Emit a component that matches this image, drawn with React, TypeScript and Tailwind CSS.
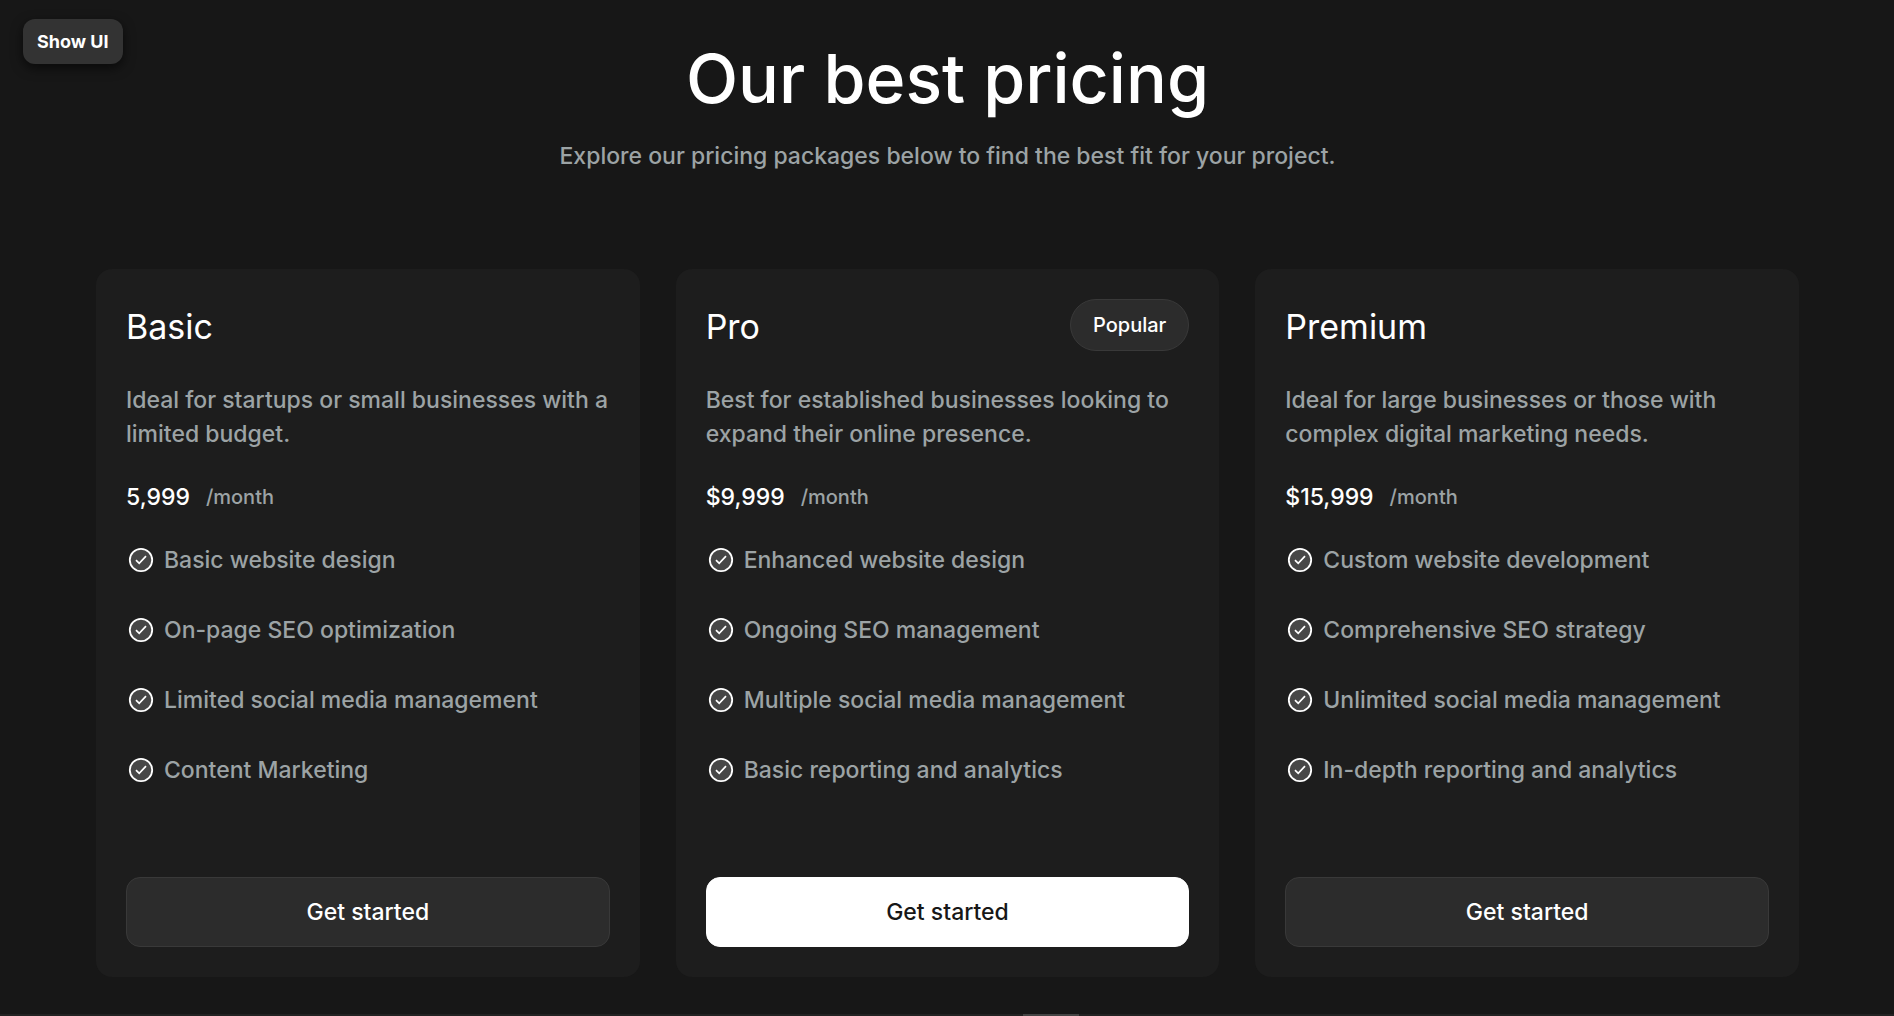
interface Plan {
  name: string;
  description: string;
  price: string;
  features: string[];
  popular?: boolean;
}

const plans: Plan[] = [
  {
    name: 'Basic',
    description: 'Ideal for startups or small businesses with a limited budget.',
    price: '5,999',
    features: [
      'Basic website design',
      'On-page SEO optimization',
      'Limited social media management',
      'Content Marketing',
    ],
  },
  {
    name: 'Pro',
    description: 'Best for established businesses looking to expand their online presence.',
    price: '$9,999',
    popular: true,
    features: [
      'Enhanced website design',
      'Ongoing SEO management',
      'Multiple social media management',
      'Basic reporting and analytics',
    ],
  },
  {
    name: 'Premium',
    description: 'Ideal for large businesses or those with complex digital marketing needs.',
    price: '$15,999',
    features: [
      'Custom website development',
      'Comprehensive SEO strategy',
      'Unlimited social media management',
      'In-depth reporting and analytics',
    ],
  },
];

function CheckIcon() {
  return (
    <svg width="30" height="30" viewBox="0 0 30 30" fill="none" className="shrink-0" aria-hidden="true">
      <circle cx="15" cy="15" r="11.2" fill="#474747" stroke="white" strokeWidth="1.8" />
      <path d="M10 15.2L13.2 18.4L20 11.2" stroke="white" strokeWidth="1.7" />
    </svg>
  );
}

function PlanCard({ name, description, price, features, popular }: Plan) {
  return (
    <article className="flex flex-col rounded-2xl bg-[#1d1d1d] p-[30px]">
      <div className="flex items-center justify-between">
        <h2 className="pt-1 text-[34px] leading-[48px] text-white">{name}</h2>
        {popular && (
          <span className="flex h-[52px] items-center rounded-full border border-[#393939] bg-[#2c2c2c] px-[22px] text-xl font-medium text-white">
            Popular
          </span>
        )}
      </div>
      <p className="mt-8 text-[23px] leading-[34px] font-[450]">{description}</p>
      <div className="mt-[29px] flex items-center gap-4">
        <span className="text-[23px] leading-[34px] font-medium text-white">{price}</span>
        <span className="text-[20px] leading-[34px] font-[450]">/month</span>
      </div>
      <ul className="mt-[29px] mb-[90px] flex flex-col gap-9">
        {features.map((feature) => (
          <li key={feature} className="flex items-center gap-2 text-[23px] leading-[34px] font-[450]">
            <CheckIcon />
            {feature}
          </li>
        ))}
      </ul>
      <button
        type="button"
        className={`mt-auto h-[70px] w-full cursor-pointer rounded-[14px] border text-[23px] ${
          popular
            ? 'border-white bg-white font-[450] text-[#171717]'
            : 'border-[#393939] bg-[#2c2c2c] font-medium text-white'
        }`}
      >
        Get started
      </button>
    </article>
  );
}

export default function App() {
  return (
    <div className="flex min-h-screen flex-col bg-[#171717] font-['Inter',sans-serif] text-[#9ca3a5]">
      <button
        type="button"
        className="absolute top-[19px] left-[23px] h-[45px] cursor-pointer rounded-xl bg-[#333333] px-[14px] text-lg font-bold text-white shadow-[0_4px_12px_rgba(0,0,0,0.6)]"
      >
        Show UI
      </button>
      <main className="flex-1 pt-[34px] pr-[95px] pb-9 pl-24">
        <header className="text-center">
          <h1 className="text-[68px] leading-[88px] font-medium text-white">Our best pricing</h1>
          <p className="mt-[17px] text-[23px] leading-[34px] font-[450]">
            Explore our pricing packages below to find the best fit for your project.
          </p>
        </header>
        <section className="mt-24 grid grid-cols-3 gap-9">
          {plans.map((plan) => (
            <PlanCard key={plan.name} {...plan} />
          ))}
        </section>
      </main>
      {/* scroll track */}
      <div className="h-[2px] bg-[#222222]">
        <div className="ml-[54%] h-full w-14 bg-[#444444]" />
      </div>
    </div>
  );
}
